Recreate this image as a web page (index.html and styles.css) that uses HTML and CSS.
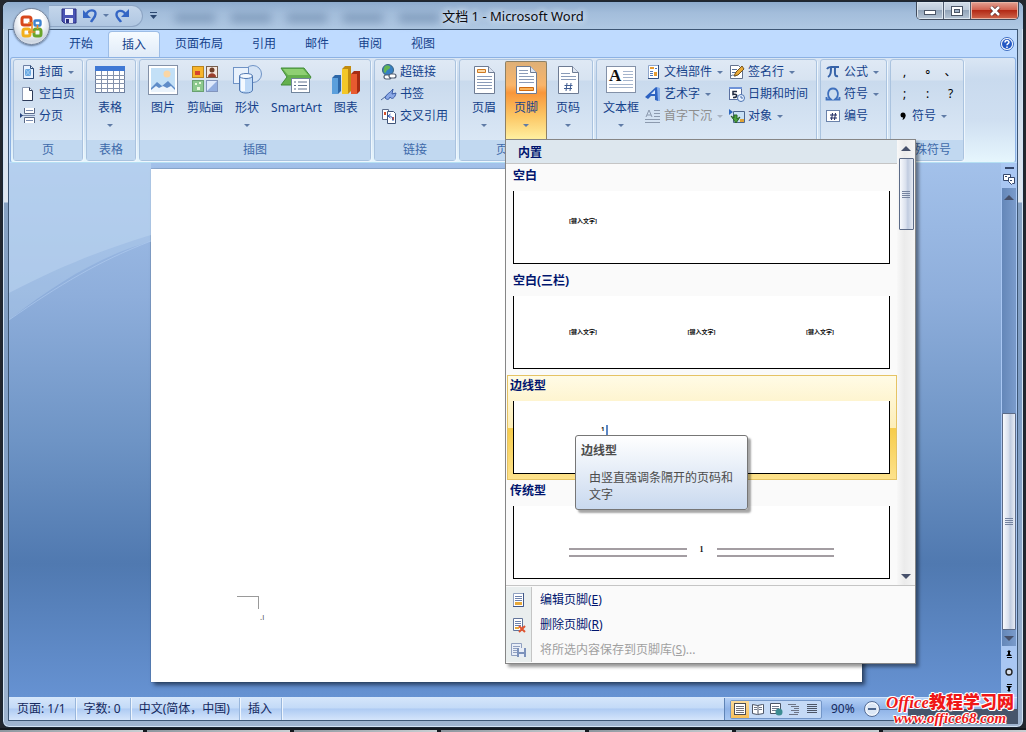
FILE: index.html
```html
<!DOCTYPE html>
<html lang="zh-CN">
<head>
    <meta charset="UTF-8">
    <meta name="viewport" content="width=device-width, initial-scale=1.0">
    <title>文档 1 - Microsoft Word</title>
    <link rel="stylesheet" href="styles.css">
</head>
<body>
    <div class="window">
        <header class="titlebar">
            <div class="quick-access">
                <button class="qa" aria-label="保存">
                    <svg width="16" height="16" viewBox="0 0 16 16"><path d="M1 1h14v14H3l-2-2z" fill="#4a55b5" stroke="#2a2f80"/><path d="M4 1h8v6H4z" fill="#f4f6ff"/><path d="M4 10h8v5H4z" fill="#dfe3f5"/><path d="M5 11h3v4H5z" fill="#2a2f80"/></svg>
                </button>
                <button class="qa" aria-label="撤消">
                    <svg width="16" height="16" viewBox="0 0 16 16"><path d="M4 7C6 1 14 1 13.500 6c0 3-3 5-4.500 8" fill="none" stroke="#3566c4" stroke-width="2.400"/><path d="M1 2v8h8z" fill="#3566c4"/></svg>
                </button>
                <i class="arrow"></i>
                <button class="qa" aria-label="重复">
                    <svg width="16" height="16" viewBox="0 0 16 16"><path d="M12 7C9 1 2 2 2.500 7c0 3 3 4 4.500 7" fill="none" stroke="#3566c4" stroke-width="2.400"/><path d="M15 1v8H7z" fill="#3566c4"/></svg>
                </button>
            </div>
            <button class="qa-more" aria-label="自定义快速访问工具栏"><svg width="7" height="8" viewBox="0 0 7 8"><path d="M0 0h7v1H0zM0 3h7L3.500 7z" fill="#2b4770"/></svg></button>
            <div class="glass-blur"><span></span><span></span><span></span><span></span><span></span></div>
            <h1 class="title">文档 1 - Microsoft Word</h1>
            <div class="window-buttons">
                <button class="win-btn" aria-label="最小化"><svg width="14" height="8" viewBox="0 0 14 8"><rect x="1.500" y="3.500" width="11" height="4" fill="#fff" stroke="#4b5566"/></svg></button>
                <button class="win-btn" aria-label="最大化"><svg width="12" height="10" viewBox="0 0 12 10"><rect x=".5" y=".5" width="11" height="9" fill="#fff" stroke="#4b5566"/><rect x="3.500" y="3.500" width="5" height="3" fill="#9fb0c6" stroke="#4b5566"/></svg></button>
                <button class="win-btn close" aria-label="关闭"><svg width="12" height="10" viewBox="0 0 12 10"><path d="M2 1l8 8M10 1L2 9" stroke="#5a2a2a" stroke-width="4"/><path d="M2 1l8 8M10 1L2 9" stroke="#fff" stroke-width="2.500"/></svg></button>
            </div>
        </header>
        <button class="office-button" aria-label="Office 按钮">
            <svg width="28" height="28" viewBox="0 0 28 28" fill="none" stroke-width="3">
                <rect x="4" y="4" width="9" height="8" rx="2" stroke="#d8481c"/>
                <rect x="16.500" y="7.500" width="6" height="5" rx="1" stroke="#3c82cf" stroke-width="2.400"/>
                <rect x="5" y="16" width="7" height="7" rx="2" stroke="#f2b01c"/>
                <rect x="16" y="16" width="7" height="7" rx="2" stroke="#6aa52c"/>
                <path d="M10 10h5M14 9v9M10 19h7M19.500 12v4" stroke="#e88a2a" stroke-width="1.600"/>
            </svg>
        </button>

        <div class="client">
            <nav class="tabs">
                <button>开始</button>
                <button class="active">插入</button>
                <button>页面布局</button>
                <button>引用</button>
                <button>邮件</button>
                <button>审阅</button>
                <button>视图</button>
                <button class="help" aria-label="帮助"><svg width="14" height="14" viewBox="0 0 14 14"><circle cx="7" cy="7" r="6.500" fill="#fff" stroke="#3b6bc0"/><circle cx="7" cy="7" r="5" fill="#2559c4"/><path d="M5 5.500C5 3 9 3 9 5.300 9 6.700 7 6.600 7 8.300M7 9.500V11" fill="none" stroke="#fff" stroke-width="1.500"/></svg></button>
            </nav>

            <div class="ribbon">
                <section class="group group-page">
                    <div class="controls">
                        <div class="stack">
                            <button class="small"><svg width="16" height="16" viewBox="0 0 16 16"><path d="M3.500 1.500h7l3 3v10h-10z" fill="#e9f2ff" stroke="#6c7fa3"/><path d="M5 5h6v7H5z" fill="#6aa9e2"/><path d="M5 5l6 7M11 5l-6 7" stroke="#a5cdf0"/><path d="M10.500 1.500v3h3v10h-10" fill="none" stroke="#2c4a78"/></svg>封面<i class="arrow"></i></button>
                            <button class="small"><svg width="16" height="16" viewBox="0 0 16 16"><path d="M2.500 1.500h7l3 3v10h-10z" fill="#fff" stroke="#8c9ab4"/><path d="M9.500 1.500v3h3M12.500 5v9.500h-10" fill="none" stroke="#2c3a58"/></svg>空白页</button>
                            <button class="small"><svg width="16" height="16" viewBox="0 0 16 16"><path d="M4.500 0v5.500h10V0M4.500 15V9.500h10V15" fill="#fff" stroke="#5a6a88"/><path d="M6 2.500h7M6 12.500h7M2 7.500h13" stroke="#7c8db0"/><path d="M0 5v5l3-2.500z" fill="#27457f"/></svg>分页</button>
                        </div>
                    </div>
                    <h2>页</h2>
                </section>

                <section class="group group-table">
                    <div class="controls">
                        <button class="large"><svg width="32" height="32" viewBox="0 0 32 32"><rect x="1.500" y="2.500" width="29" height="26" fill="#fff" stroke="#6d7f9f"/><path d="M1 2h30v5H1z" fill="#3f78d4"/><path d="M1 11.500h30M1 15.500h30M1 19.500h30M1 24.500h30M7.500 7v22M13.500 7v22M19.500 7v22M25.500 7v22" stroke="#8492ac"/></svg><span>表格</span><i class="arrow"></i></button>
                    </div>
                    <h2>表格</h2>
                </section>

                <section class="group group-pictures">
                    <div class="controls">
                        <button class="large"><svg width="32" height="32" viewBox="0 0 32 32"><rect x="1.500" y="1.500" width="29" height="29" fill="#fff" stroke="#8391a8"/><path d="M4 4h24v24H4z" fill="#c3e0f7"/><circle cx="20" cy="10" r="3.500" fill="#fbd6a4"/><path d="M4 24l6-6 5 4 6-5 7 7v4H4z" fill="#5f8cc8"/><path d="M4 26l5-4 3 2 4-2 4 2 4-2 4 4v2H4z" fill="#eaf3fc"/></svg><span>图片</span></button>
                        <button class="large"><svg width="32" height="32" viewBox="0 0 32 32"><rect x="3.500" y="2.500" width="11" height="11" fill="#f7b52c" stroke="#b88420"/><path d="M6 7h5v4H6z" fill="#d6452c"/><rect x="17.500" y="2.500" width="11" height="11" fill="#f6e7de" stroke="#77604f"/><circle cx="23" cy="6" r="2.500" fill="#70402a"/><path d="M19 13c0-5 8-5 8 0z" fill="#9b3f2c"/><rect x="3.500" y="16.500" width="11" height="11" fill="#8cc98e" stroke="#69a070"/><path d="M6 19h2v2H6zM10 18h2v2h-2zM8 23h3v3H8z" fill="#e8f7dc"/><rect x="17.500" y="16.500" width="11" height="11" fill="#dfe9fb" stroke="#8295bd"/><path d="M28 17v10H18z" fill="#93aee0"/></svg><span>剪贴画</span></button>
                        <button class="large"><svg width="32" height="32" viewBox="0 0 32 32"><circle cx="22" cy="10" r="8.500" fill="#d4e3f5" stroke="#6f93c6"/><rect x="2.500" y="3.500" width="15" height="16" fill="#e8f1fc" stroke="#6f93c6"/><path d="M8.500 12v14c0 4 13 4 13 0V12" fill="#bed9f7" stroke="#5078b2"/><path d="M10 13v14h4V14z" fill="#f4f9ff"/><ellipse cx="15" cy="12" rx="6.500" ry="2.500" fill="#f2f8ff" stroke="#5078b2"/></svg><span>形状</span><i class="arrow"></i></button>
                        <button class="large"><svg width="32" height="32" viewBox="0 0 32 32"><path d="M1 4h23l7 9-5 8H1l6-8z" fill="#64b04e" stroke="#438c38"/><path d="M3 5h20l5 6H8z" fill="#8fd073"/><rect x="11.500" y="14.500" width="18" height="14" fill="#fff" stroke="#71859c"/><path d="M14 18h2M14 21.500h2M14 25h2M18 18h9M18 21.500h9M18 25h9" stroke="#60738f"/></svg><span>SmartArt</span></button>
                        <button class="large"><svg width="32" height="32" viewBox="0 0 32 32"><path d="M2 14l3-3h6v16l-3 3H2z" fill="#2d67a8"/><path d="M2 14h6v16H2z" fill="#5b9fdc"/><path d="M12 5l3-3h6v25l-3 3h-6z" fill="#c18b10"/><path d="M12 5h6v25h-6z" fill="#f3c728"/><path d="M21 10l3-3h6v20l-3 3h-6z" fill="#a72c12"/><path d="M21 10h6v20h-6z" fill="#e85a30"/></svg><span>图表</span></button>
                    </div>
                    <h2>插图</h2>
                </section>

                <section class="group group-links">
                    <div class="controls">
                        <div class="stack">
                            <button class="small"><svg width="16" height="16" viewBox="0 0 16 16"><circle cx="7" cy="6" r="5.500" fill="#377fc4" stroke="#39637f"/><path d="M4 2c3-2 6 0 5 2S6 5 5 8 1 6 4 2z" fill="#64b552"/><rect x="3" y="11" width="7" height="4" rx="2" fill="#fff" stroke="#505c70" stroke-width="1.200"/><rect x="8" y="10" width="7" height="4" rx="2" fill="#fff" stroke="#505c70" stroke-width="1.200"/></svg>超链接</button>
                            <button class="small"><svg width="16" height="16" viewBox="0 0 16 16"><path d="M0 14L9 7" stroke="#4d6796"/><path d="M4 12C6 7 8 8 12 3l-1 5 4-1c-1 5-4 7-6 4-1 3-3 3-5 1z" fill="#8ba8e6" stroke="#385aa5"/></svg>书签</button>
                            <button class="small"><svg width="16" height="16" viewBox="0 0 16 16"><path d="M1.500 1.500h6v10h-6z" fill="#fff" stroke="#5b6c8c"/><path d="M6.500 3.500h6l2 2v10h-8z" fill="#fff" stroke="#3f5479"/><path d="M3 4h2v3H3zM11 9h2v3h-2z" fill="#d3502d"/><path d="M12 13c0-4-2-5-4-5M9.500 6L7 8l2.500 2" fill="none" stroke="#2c57b5"/></svg>交叉引用</button>
                        </div>
                    </div>
                    <h2>链接</h2>
                </section>

                <section class="group group-footer">
                    <div class="controls">
                        <button class="large gallery-btn"><svg width="32" height="32" viewBox="0 0 32 32"><path d="M6.500 2.500h14l6 6v21h-20z" fill="#fff" stroke="#6d7b93"/><path d="M20.500 2.500v6h6" fill="#dfe6f2" stroke="#6d7b93"/><path d="M9.500 5.500h8v3h-8z" fill="#fbd9a8" stroke="#cf7a22"/><path d="M9 12.500h15M9 15.500h15M9 18.500h15M9 21.500h15M9 24.500h15" stroke="#8a9bb8"/></svg><span>页眉</span><i class="arrow"></i></button>
                        <div class="split">
                            <button class="large gallery-btn pressed" aria-expanded="true"><svg width="32" height="32" viewBox="0 0 32 32"><path d="M6.500 2.500h14l6 6v21h-20z" fill="#fff" stroke="#6d7b93"/><path d="M20.500 2.500v6h6" fill="#dfe6f2" stroke="#6d7b93"/><path d="M9 6.500h9M9 9.500h9M9 12.500h15M9 15.500h15M9 18.500h15" stroke="#8a9bb8"/><path d="M9.500 23.500h14v3h-14z" fill="#fbb45a" stroke="#cf6a12"/></svg><span>页脚</span><i class="arrow"></i></button>

                            <div class="menu">
                                <div class="menu-top">
                                    <div class="menu-list">
                                        <h3>内置</h3>
                                        <div class="gallery">
                                            <button class="item indent">
                                                <strong>空白</strong>
                                                <span class="preview top"><b>[键入文字]</b></span>
                                            </button>
                                            <button class="item indent">
                                                <strong>空白(三栏)</strong>
                                                <span class="preview"><b>[键入文字]</b><b>[键入文字]</b><b>[键入文字]</b></span>
                                            </button>
                                            <button class="item active">
                                                <strong>边线型</strong>
                                                <span class="preview top bar"><b>1</b><i></i></span>
                                            </button>
                                            <button class="item">
                                                <strong>传统型</strong>
                                                <span class="preview rules"><i></i><b>1</b><i></i></span>
                                            </button>
                                        </div>
                                    </div>
                                    <div class="menu-scroll">
                                        <i class="tri up"></i>
                                        <div class="thumb"><i class="grip"></i></div>
                                        <i class="tri down"></i>
                                    </div>
                                </div>
                                <div class="menu-actions">
                                    <button><span class="gutter"><svg width="16" height="16" viewBox="0 0 16 16"><path d="M2.500 1.500h10v13h-10z" fill="#fff" stroke="#8fa0c0"/><path d="M12.500 1v13.500H2" fill="none" stroke="#3f5688"/><path d="M4 4.500h7M4 6.500h7M4 8.500h7" stroke="#6c82ad"/><path d="M4 10h7v3H4z" fill="#e7a93b"/></svg></span><span>编辑页脚(<u>E</u>)</span></button>
                                    <button><span class="gutter"><svg width="16" height="16" viewBox="0 0 16 16"><path d="M2.500 1.500h9v12h-9z" fill="#fff" stroke="#62759b"/><path d="M4 4.500h6M4 6.500h6M4 8.500h6" stroke="#6c82ad"/><path d="M4 10h4v2H4z" fill="#e7a93b"/><path d="M8 9l6 6M14 9l-6 6" stroke="#e05530" stroke-width="2"/></svg></span><span>删除页脚(<u>R</u>)</span></button>
                                    <button disabled><span class="gutter"><svg width="16" height="16" viewBox="0 0 16 16"><path d="M.5 1.500h10v12H.5z" fill="#e8eef7" stroke="#90a0c0"/><path d="M2 4.500h7M2 6.500h7M2 8.500h4M2 10.500h4" stroke="#90a0c0"/><path d="M6 6h9v9H6z" fill="#7c92bb"/><path d="M8 6h5v4H8zM8 12h5v3H8z" fill="#e8eef7"/></svg></span><span>将所选内容保存到页脚库(<u>S</u>)...</span></button>
                                </div>
                                <div class="tooltip" role="tooltip">
                                    <strong>边线型</strong>
                                    <p>由竖直强调条隔开的页码和文字</p>
                                </div>
                            </div>
                        </div>
                        <button class="large gallery-btn"><svg width="32" height="32" viewBox="0 0 32 32"><path d="M6.500 2.500h14l6 6v21h-20z" fill="#fff" stroke="#6d7b93"/><path d="M20.500 2.500v6h6" fill="#dfe6f2" stroke="#6d7b93"/><path d="M9 9.500h9M9 12.500h15M9 15.500h15" stroke="#8a9bb8"/><path d="M15 19l-1 8M19 19l-1 8M12.500 21.500h8M12 24.500h8" stroke="#3f5c91"/></svg><span>页码</span><i class="arrow"></i></button>
                    </div>
                    <h2>页眉和页脚</h2>
                </section>

                <section class="group group-text">
                    <div class="controls">
                        <button class="large"><svg width="32" height="32" viewBox="0 0 32 32"><rect x="1.500" y="2.500" width="29" height="26" fill="#fff" stroke="#8391a8"/><text x="4" y="17" class="glyph-a">A</text><path d="M18 7.500h10M18 10.500h10M18 13.500h10M18 16.500h10M4 20.500h24M4 23.500h24" stroke="#a5b5cd"/></svg><span>文本框</span><i class="arrow"></i></button>
                        <div class="stack">
                            <button class="small"><svg width="16" height="16" viewBox="0 0 16 16"><path d="M3.500 1.500h10v13h-10z" fill="#fff" stroke="#8fa6cc"/><path d="M13.500 1v13.500H3" fill="none" stroke="#2f4d80"/><path d="M5 3h4v2H5zM9 8h3v4H9z" fill="#e69b31"/><path d="M5 7.500h3M5 9.500h3M5 11.500h3M10 4.500h2" stroke="#5479b8"/></svg>文档部件<i class="arrow"></i></button>
                            <button class="small"><svg width="16" height="16" viewBox="0 0 16 16"><path d="M0 11L11 1l2 1v13l-3-1v-4H6l-3 3z" fill="#2d62c2"/><path d="M10 4v4H6z" fill="#dce9fb"/><path d="M12 1l3 1v13h-2z" fill="#86aeea"/></svg>艺术字<i class="arrow"></i></button>
                            <button class="small" disabled><svg width="16" height="16" viewBox="0 0 16 16"><path d="M1 9l3-7 3 7M2 7h4M9 2.500h6M9 5.500h6M9 8.500h6M0 11.500h15M0 14.500h15" fill="none" stroke="#8c9aae"/></svg>首字下沉<i class="arrow"></i></button>
                        </div>
                        <div class="stack">
                            <button class="small"><svg width="16" height="16" viewBox="0 0 16 16"><path d="M1.500 1.500h8l4 4v9h-12z" fill="#fff" stroke="#63728e"/><path d="M3 5.500h5M3 8.500h4M2 12c3-3 3 2 6-1" fill="none" stroke="#597299"/><path d="M5 12l2-4 6-6 2 3-6 6z" fill="#e9a936" stroke="#725321"/></svg>签名行<i class="arrow"></i></button>
                            <button class="small"><svg width="16" height="16" viewBox="0 0 16 16"><rect x=".5" y="1.500" width="12" height="12" fill="#fff" stroke="#5a70a0"/><path d="M0 1h13v2H0z" fill="#6f93d8"/><path d="M8 5.500H4v3c5-1 5 3 0 3" fill="none" stroke="#222b42" stroke-width="1.500"/><circle cx="12" cy="12" r="3.500" fill="#e9f2ff" stroke="#4b73b2"/><path d="M12 10v2h2" fill="none" stroke="#4b73b2"/></svg>日期和时间</button>
                            <button class="small"><svg width="16" height="16" viewBox="0 0 16 16"><path d="M4.500 3.500h11v11h-11z" fill="#c9e1f5" stroke="#4c668d"/><path d="M0 1v6l4-3z" fill="#2b66bd"/><path d="M2 8l3 2V7h3v4l3-2-4 6z" fill="#48a33c" stroke="#286224"/><path d="M11 11h4v3h-4z" fill="#e0a336"/></svg>对象<i class="arrow"></i></button>
                        </div>
                    </div>
                    <h2>文本</h2>
                </section>

                <section class="group group-symbols">
                    <div class="controls">
                        <div class="stack">
                            <button class="small"><svg width="16" height="16" viewBox="0 0 16 16"><path d="M2 5c1-2 2-2 4-2h8M6 3c0 5 0 8-3 10M10 3c0 6-1 10 3 9" fill="none" stroke="#3763a8" stroke-width="2"/></svg>公式<i class="arrow"></i></button>
                            <button class="small"><svg width="16" height="16" viewBox="0 0 16 16"><path d="M1.500 11v2.500H6c-5-4-3-11 2-11s7 7 2 11h4.500V11" fill="none" stroke="#3f70bd" stroke-width="1.800"/></svg>符号<i class="arrow"></i></button>
                            <button class="small"><svg width="16" height="16" viewBox="0 0 16 16"><rect x="1.500" y="2.500" width="13" height="11" fill="#fff" stroke="#6a82aa"/><path d="M7.500 5l-1 7M10.500 5l-1 7M5 7h7M5 10h7" stroke="#1b2860"/></svg>编号</button>
                        </div>
                    </div>
                    <h2>符号</h2>
                </section>

                <section class="group group-special">
                    <div class="controls">
                        <div class="stack">
                            <div class="marks"><button>,</button><button>∘</button><button>、</button></div>
                            <div class="marks"><button>;</button><button>:</button><button>?</button></div>
                            <button class="small"><svg width="16" height="16" viewBox="0 0 16 16"><circle cx="10" cy="7" r="2.500"/><path d="M12.500 7c0 3-1 4-3 5l1-4z"/></svg>符号<i class="arrow"></i></button>
                        </div>
                    </div>
                    <h2>特殊符号</h2>
                </section>
            </div>

            <main class="document">
                <svg class="swoosh" viewBox="0 0 142 160" preserveAspectRatio="none"><path d="M0 0h142v72C90 88 50 104 0 130z" fill="#bdd6f2" opacity=".5"/><path d="M0 0h142v78C90 94 50 118 0 157z" fill="#bdd6f2" opacity=".35"/><path d="M142 78C90 98 50 122 0 157" fill="none" stroke="#b3cdf0" opacity=".6"/></svg>
                <div class="page">
                    <div class="crop"></div>
                    <p>.ı</p>
                </div>
                <div class="doc-scroll">
                    <i class="split-bar"></i>
                    <svg width="12" height="12" viewBox="0 0 12 12"><path d="M.5 1.500h7v6h-7z" fill="#fff" stroke="#35476b"/><path d="M5.500 4.500h6v6h-2l-1 1-3-3z" fill="#fff" stroke="#35476b"/><path d="M2 3.500h2M7 7.500h2" stroke="#35476b"/></svg>
                    <div class="track">
                        <i class="tri up"></i>
                        <div class="thumb"><i class="grip"></i></div>
                        <i class="tri down"></i>
                    </div>
                    <div class="browse">
                        <svg width="8" height="9" viewBox="0 0 8 9"><path d="M4 0l2 2H2zM4 3l3 3H1zM2 7h5v1H2zM3 2h2v2H3z"/></svg>
                        <svg width="8" height="8" viewBox="0 0 8 8"><circle cx="4" cy="4" r="3" fill="#d7dde8" stroke="#222" stroke-width="1.400"/></svg>
                        <svg width="8" height="9" viewBox="0 0 8 9"><path d="M2 0h5v1H2zM1 2h6L4 5zM2 6h4L4 8zM3 4h2v2H3z"/></svg>
                    </div>
                </div>
            </main>

            <footer class="status">
                <span>页面: 1/1</span>
                <span>字数: 0</span>
                <span>中文(简体，中国)</span>
                <span>插入</span>
                <div class="status-right">
                    <div class="views">
                        <button class="active" aria-label="页面视图"><svg width="14" height="14" viewBox="0 0 14 14"><rect x="1.500" y="1.500" width="11" height="11" fill="#fff" stroke="#4c4c50"/><path d="M3 4.500h8M3 6.500h8M3 8.500h8M3 10.500h8" stroke="#707078"/></svg></button>
                        <button aria-label="阅读版式"><svg width="14" height="14" viewBox="0 0 14 14"><path d="M1.500 2.500l5 1 5-1h1v9l-6 1-5-1zM7 3v9" fill="#fff" stroke="#4c5566"/><path d="M3 5.500h3M3 7.500h3M8 5.500h3M8 7.500h3" stroke="#70798c"/></svg></button>
                        <button aria-label="Web 版式"><svg width="14" height="14" viewBox="0 0 14 14"><path d="M1.500 1.500h10v10h-10z" fill="#fff" stroke="#4c5566"/><path d="M3 4.500h7M3 6.500h7M3 8.500h5" stroke="#70798c"/><circle cx="10" cy="10" r="3.500" fill="#3c8c92"/></svg></button>
                        <button aria-label="大纲视图"><svg width="14" height="14" viewBox="0 0 14 14"><path d="M1 2.500h8M4 4.500h8M7 6.500h5M4 8.500h8M7 10.500h5M2 12.500h9" stroke="#6c7486"/></svg></button>
                        <button aria-label="普通视图"><svg width="14" height="14" viewBox="0 0 14 14"><path d="M2 2.500h10M2 4.500h10M2 6.500h10M2 8.500h10M2 10.500h10" stroke="#4c5566"/></svg></button>
                    </div>
                    <button class="zoom">90%</button>
                    <button class="zoom-out" aria-label="缩小"><svg width="16" height="16" viewBox="0 0 16 16"><circle cx="8" cy="8" r="7.500" fill="#f1f6fd" stroke="#536c96"/><circle cx="8" cy="8" r="5.500" fill="#dce7f6"/><path d="M4 7h8v2H4z" fill="#4e678f"/></svg></button>
                    <i class="zoom-line"></i>
                </div>
            </footer>
        </div>
        <div class="language-bar"></div>
        <div class="watermark">
            <span>Office<b>教程学习网</b></span>
            <span>www.office68.com</span>
        </div>
    </div>
    <div class="taskbar"><i></i><i></i><i></i><i></i><i></i><i></i><i></i></div>
</body>
</html>
```
FILE: styles.css
```css
* {
    box-sizing: border-box;
}
body {
    margin: 0;
    height: 100vh;
    display: flex;
    flex-direction: column;
    background-color: #23272e;
    font-family: "Noto Sans", "Noto Sans CJK SC", sans-serif;
    font-size: 12px;
    line-height: 16px;
    color: #15428b;
    overflow: hidden;
}
button {
    font: inherit;
    color: inherit;
    background: none;
    border: 0;
    padding: 0;
    margin: 0;
}
svg {
    display: block;
    flex: none;
}
h1, h2, h3, p {
    margin: 0;
    font-size: 12px;
    font-weight: normal;
}
.window {
    position: relative;
    flex: 1;
    min-height: 0;
    display: flex;
    flex-direction: column;
    margin: 1px 2px 0 2px;
    padding: 0 5px 6px 5px;
    border: 1px solid #1b2634;
    border-radius: 7px;
    background: linear-gradient(to bottom, #a9c2dd 0, #d7e2ef 130px, #dfe7f0 200px, #87a2c3 201px, #7d9cc4 400px, #9fb4cf 100%);
    box-shadow: inset 0 0 0 1px #d3e3f3;
}

/* title bar */
.titlebar {
    display: flex;
    align-items: center;
    height: 27px;
    margin: 0 -5px;
    padding-left: 46px;
    border-radius: 7px 7px 0 0;
    background: linear-gradient(to bottom, #8eabcd, #a3bddb 40%, #afc8e3);
}
.quick-access {
    display: flex;
    align-items: center;
    gap: 5px;
    height: 22px;
    padding: 0 12px 0 12px;
    border: 1px solid #8da5c4;
    border-left: 0;
    border-radius: 0 11px 11px 0;
    background: linear-gradient(to bottom, #c4d6eb, #b0c7e2);
}
.qa-more {
    margin-left: 7px;
}
.arrow {
    flex: none;
    width: 0;
    border: 3px solid transparent;
    border-top-color: #5f7ba6;
    border-bottom: 0;
}
.glass-blur {
    display: flex;
    gap: 16px;
    margin: 4px 0 0 18px;
    filter: blur(4px);
}
.glass-blur span {
    width: 40px;
    height: 10px;
    background-color: #6d89ab;
    opacity: .6;
}
.title {
    position: absolute;
    left: 0;
    right: 0;
    top: 6px;
    text-align: center;
    font-size: 13px;
    color: #0c0c10;
    text-shadow: 0 0 6px #e4eef8, 0 0 6px #e4eef8;
}
.window-buttons {
    position: absolute;
    right: 4px;
    top: 0;
    display: flex;
    height: 18px;
    border: 1px solid #404b5c;
    border-top: 0;
    border-radius: 0 0 5px 5px;
    overflow: hidden;
}
.win-btn {
    display: flex;
    align-items: center;
    justify-content: center;
    width: 27px;
    border-right: 1px solid #515d70;
    background: linear-gradient(to bottom, #d3dde8, #bdcad9 48%, #92a4b9 50%, #b7c6d6);
    box-shadow: inset 0 0 0 1px #dce5ee;
}
.win-btn.close {
    width: 47px;
    border-right: 0;
    background: linear-gradient(to bottom, #e3a294, #cf5f4c 48%, #b32a16 50%, #d0674d);
    box-shadow: inset 0 0 0 1px #e9b5a5;
}
.office-button {
    position: absolute;
    left: 10px;
    top: 6px;
    z-index: 3;
    display: flex;
    align-items: center;
    justify-content: center;
    width: 37px;
    height: 37px;
    border: 1px solid #74839b;
    border-radius: 50%;
    background: radial-gradient(circle at 50% 35%, #fff 40%, #cdd6e2 70%, #f5f8fc);
    box-shadow: 0 1px 2px #5d7391;
}

.client {
    flex: 1;
    min-height: 0;
    display: flex;
    flex-direction: column;
    border: 1px solid #3d5674;
    background-color: #bfdbff;
}

/* tabs */
.tabs {
    display: flex;
    align-items: flex-end;
    gap: 1px;
    height: 27px;
    padding-left: 46px;
}
.tabs button {
    height: 26px;
    padding: 0 14px;
}
.tabs .active {
    position: relative;
    z-index: 1;
    border: 1px solid #9dbde6;
    border-bottom: 0;
    border-radius: 4px 4px 0 0;
    padding: 0 13px;
    background: linear-gradient(to bottom, #f6fbff, #e0ebf8);
}
.tabs .help {
    margin-left: auto;
    padding: 0 3px 0 0;
}

/* ribbon */
.ribbon {
    position: relative;
    z-index: 2;
    display: flex;
    gap: 3px;
    height: 106px;
    margin: 0 1px;
    padding: 1px 2px;
    border: 1px solid #8db2e3;
    border-bottom-color: #b5e0f3;
    border-radius: 3px;
    background: linear-gradient(to bottom, #dae6f4, #c9daee 20%, #cfdff1 60%, #e6f6fd);
}
.group {
    display: flex;
    flex-direction: column;
    flex: none;
    height: 102px;
    border: 1px solid #aac3df;
    border-radius: 3px;
    background: linear-gradient(to bottom, #dfe9f5, #d7e3f1 20%, #c9daed 21%, #dae7f5 80%);
    box-shadow: 1px 1px 0 #eef6fd;
}
.group h2 {
    height: 20px;
    line-height: 20px;
    text-align: center;
    color: #3e6aaa;
    background-color: #c1d8f0;
}
.group-page { width: 70px; }
.group-table { width: 50px; }
.group-pictures { width: 232px; }
.group-links { width: 82px; }
.group-footer { width: 134px; }
.group-text { width: 221px; }
.group-symbols { width: 67px; }
.group-special { width: 74px; }
.controls {
    flex: 1;
    display: flex;
    padding: 1px 2px;
}
.group-page .controls,
.group-links .controls {
    padding-left: 6px;
}
.group-table .controls,
.group-pictures .controls {
    padding-left: 5px;
}
.group-footer .controls {
    padding-left: 3px;
}
.group-text .controls {
    padding-left: 0;
}
.group-symbols .controls {
    padding-left: 4px;
}
.stack {
    display: flex;
    flex-direction: column;
}
.stack + .stack {
    margin-left: 6px;
}
.small {
    display: flex;
    align-items: center;
    gap: 3px;
    height: 22px;
    white-space: nowrap;
}
.small .arrow {
    margin-left: 2px;
}
.small:disabled {
    color: #8d8d8d;
}
.small:disabled .arrow {
    border-top-color: #a9b3c2;
}
.large {
    display: flex;
    flex-direction: column;
    align-items: center;
    height: 78px;
    padding: 3px 6px 0;
    white-space: nowrap;
}
.large svg {
    margin: 0 -4px;
}
.large span {
    margin-top: 4px;
}
.large .arrow {
    margin-top: 8px;
}
.gallery-btn {
    width: 42px;
}
.pressed {
    padding-top: 2px;
    border: 1px solid #8e8165;
    border-bottom: 0;
    border-radius: 2px 2px 0 0;
    background: linear-gradient(to bottom, #dfb077, #f9b56a 30%, #f8963a 40%, #fcc664 70%, #fff0a0);
}
.glyph-a {
    font: bold 17px "Liberation Serif", serif;
    fill: #111;
}
.marks {
    display: flex;
    height: 22px;
}
.marks button {
    width: 23px;
    color: #000;
}
.split {
    position: relative;
}

/* footer gallery */
.menu {
    position: absolute;
    left: 0;
    top: 100%;
    width: 411px;
    border: 1px solid #868686;
    background-color: #fafafa;
    color: #00156e;
    box-shadow: 3px 3px 3px rgba(0, 0, 0, 0.4);
}
.menu-top {
    display: flex;
    border-bottom: 1px solid #c5c5c5;
}
.menu-list {
    flex: 1;
}
.menu h3 {
    height: 24px;
    padding-left: 12px;
    line-height: 25px;
    font-weight: bold;
    border-bottom: 1px solid #c5c5c5;
    background-color: #dde7ee;
}
.gallery {
    display: flex;
    flex-direction: column;
    padding: 1px 0 0 1px;
}
.item {
    display: flex;
    flex-direction: column;
    height: 105px;
    padding: 0 6px 5px 5px;
    border: 1px solid transparent;
    text-align: left;
}
.item strong {
    height: 25px;
    margin-left: -3px;
    line-height: 19px;
}
.item.indent strong {
    margin-left: 0;
}
.item.active {
    border-color: #e5c365;
    background: linear-gradient(to bottom, #fffbe6, #fdeeb8 50%, #f6cc4c 51%, #fde28c);
}
.preview {
    display: flex;
    align-items: center;
    justify-content: space-between;
    align-self: stretch;
    height: 73px;
    padding: 0 55px;
    border: 1px solid #000;
    border-top: 0;
    background-color: #fff;
    color: #111;
    font-size: 6px;
    line-height: 8px;
}
.preview.top {
    align-items: flex-start;
    padding-top: 26px;
}
.preview.bar {
    justify-content: flex-start;
    gap: 2px;
    padding: 24px 0 0 87px;
}
.preview.bar i {
    width: 2px;
    height: 12px;
    background-color: #5b86c4;
}
.preview.rules {
    align-items: flex-end;
    padding-bottom: 21px;
    gap: 13px;
}
.preview.rules i {
    flex: 1;
    height: 9px;
    border: solid #a39da2;
    border-width: 2px 0;
}
.preview.rules b {
    font-family: "Liberation Serif", serif;
    font-size: 8px;
    line-height: 15px;
}
.menu-scroll {
    display: flex;
    flex-direction: column;
    align-items: center;
    width: 18px;
    padding: 6px 1px;
    background: linear-gradient(to right, #f8f8f8, #ebebeb 40%, #f5f5f5);
}
.tri {
    flex: none;
    width: 0;
    border: 5px solid transparent;
}
.tri.up {
    border-top: 0;
    border-bottom-color: #46506a;
}
.tri.down {
    border-bottom: 0;
    border-top-color: #46506a;
    margin-top: auto;
}
.thumb {
    display: flex;
    align-items: center;
    justify-content: center;
    border: 1px solid #5c6b87;
    border-radius: 1px;
    background: linear-gradient(to right, #f8fafd, #d9e0ed 45%, #c0cce0 60%, #e6ebf4);
}
.menu-scroll .thumb {
    width: 15px;
    height: 72px;
    margin-top: 7px;
}
.grip {
    width: 8px;
    height: 7px;
    background: repeating-linear-gradient(to bottom, #7684a0 0, #7684a0 1px, transparent 1px, transparent 2px);
}
.menu-actions button {
    display: flex;
    align-items: center;
    gap: 8px;
    width: 100%;
    height: 25px;
}
.menu-actions button:disabled {
    color: #a0a0a0;
}
.menu-actions {
    padding: 1px 0;
}
.gutter {
    display: flex;
    align-items: center;
    width: 26px;
    height: 100%;
    padding-left: 5px;
    border-right: 1px solid #c5c5c5;
    background-color: #e9eeee;
}
.tooltip {
    position: absolute;
    left: 69px;
    top: 295px;
    width: 173px;
    padding: 7px 5px 6px;
    border: 1px solid #767676;
    border-radius: 3px;
    background: linear-gradient(to bottom, #fff, #c9d9ef);
    color: #4c4c4c;
    box-shadow: 3px 3px 2px rgba(0, 0, 0, 0.35);
}
.tooltip p {
    margin: 10px 0 0 8px;
    line-height: 17px;
}

/* document area */
.document {
    position: relative;
    flex: 1;
    min-height: 0;
    display: flex;
    background: linear-gradient(to bottom, #a3c1ea, #8eaedb 25%, #6e94c5 52%, #5079b0 75%, #6692d2);
}
.swoosh {
    position: absolute;
    left: 0;
    top: 0;
    width: 142px;
    height: 160px;
}
.page {
    flex: 1;
    display: flex;
    flex-direction: column;
    justify-content: flex-end;
    margin: 6px 139px 15px 142px;
    padding: 0 0 57px 86px;
    background-color: #fff;
    box-shadow: 0 0 1px #26364f, 3px 3px 4px rgba(20, 35, 60, 0.7);
}
.crop {
    width: 22px;
    height: 13px;
    border: solid #9a9a9a;
    border-width: 1px 1px 0 0;
}
.page p {
    margin-left: 23px;
    font-size: 8px;
    line-height: 16px;
    color: #555;
}
.doc-scroll {
    flex: none;
    display: flex;
    flex-direction: column;
    align-items: center;
    width: 16px;
    padding-top: 4px;
    background-color: #a9c7f3;
}
.split-bar {
    width: 9px;
    height: 2px;
    margin-bottom: 4px;
    background-color: #35476b;
}
.track {
    flex: 1;
    display: flex;
    flex-direction: column;
    align-items: center;
    width: 14px;
    margin-top: 3px;
    padding: 7px 0 5px;
    background: linear-gradient(to right, #6487b9, #7a9bcb);
}
.track .thumb {
    width: 14px;
    height: 217px;
    margin-top: auto;
}
.track .tri.down {
    margin-top: 6px;
}
.browse {
    display: flex;
    flex-direction: column;
    align-items: center;
    justify-content: space-between;
    height: 51px;
    padding: 4px 0;
}

/* status bar */
.status {
    display: flex;
    height: 23px;
    border-top: 1px solid #d5e6fb;
    background: linear-gradient(to bottom, #d4e5fa, #c3daf7 45%, #aecbf3 50%, #d5e5fb);
    color: #15295e;
}
.status > span {
    padding: 0 9px 0 8px;
    line-height: 22px;
    border-right: 1px solid #98b6dc;
    box-shadow: 1px 0 0 #eef5fd;
}
.status-right {
    display: flex;
    align-items: center;
    width: 293px;
    margin-left: auto;
    padding-left: 5px;
    border-left: 1px solid #5f84b6;
    background: linear-gradient(to bottom, #b4d0f6, #8fb3e7 50%, #a9c8f2);
}
.views {
    display: flex;
    border: 1px solid #7396c8;
    border-radius: 2px;
    background-color: #c5daf6;
}
.views button {
    display: flex;
    align-items: center;
    justify-content: center;
    width: 18px;
    height: 17px;
}
.views .active {
    background: linear-gradient(to bottom, #fbdb9a, #f8bf58);
}
.zoom {
    margin-left: 9px;
}
.zoom-out {
    margin-left: 9px;
}
.zoom-line {
    flex: 1;
    height: 1px;
    background-color: #5c7cab;
}
.language-bar {
    position: absolute;
    right: 5px;
    bottom: 3px;
    width: 110px;
    height: 15px;
    background-color: #46556b;
}
.watermark {
    position: absolute;
    right: 9px;
    bottom: 2px;
    display: flex;
    flex-direction: column;
    align-items: center;
    font-family: "Liberation Serif", "Noto Sans CJK SC", serif;
    font-style: italic;
    font-weight: bold;
    font-size: 15px;
    line-height: 14px;
    color: #f01818;
    text-shadow: 1px 0 0 #fff, -1px 0 0 #fff, 0 1px 0 #fff, 0 -1px 0 #fff, 1px 1px 0 #fff, -1px -1px 0 #fff;
    white-space: nowrap;
}
.watermark span:first-child {
    font-size: 17px;
    line-height: 17px;
}
.watermark b {
    font-style: normal;
}

.taskbar {
    display: flex;
    gap: 4px;
    height: 4px;
    padding-top: 2px;
    background-color: #15191f;
}
.taskbar i {
    flex: 1;
    background: linear-gradient(to right, #8d979f, #c8ced2);
}
```
